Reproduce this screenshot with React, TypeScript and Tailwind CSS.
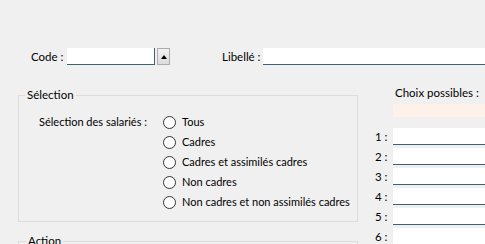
import { useState } from "react";

const options = [
  "Tous",
  "Cadres",
  "Cadres et assimilés cadres",
  "Non cadres",
  "Non cadres et non assimilés cadres",
];

function Radio({ label, checked, onClick }: { label: string; checked: boolean; onClick: () => void }) {
  return (
    <div className="flex items-center h-[20px] cursor-default" onClick={onClick}>
      <span className="w-[13px] h-[13px] shrink-0 rounded-full border border-[#333] bg-white flex items-center justify-center">
        {checked && <span className="w-[5px] h-[5px] rounded-full bg-[#333]" />}
      </span>
      <span className="ml-[6px]">{label}</span>
    </div>
  );
}

export default function App() {
  const [selected, setSelected] = useState<number | null>(null);

  return (
    <div
      className="w-[485px] h-[244px] overflow-hidden bg-[#f0f0f0] text-[11.5px] leading-[16px] text-black pt-[48px] whitespace-nowrap"
      style={{ fontFamily: 'Lato, "Liberation Sans", sans-serif' }}
    >
      {/* Top row */}
      <div className="flex items-center h-[17px]">
        <span className="ml-[31px] w-[36px]">Code :</span>
        <div className="w-[88px] h-[17px] bg-white border-b border-r border-[#3b6172]" />
        <button className="ml-[2px] w-[13px] h-[17px] border border-[#acacac] bg-gradient-to-b from-[#f2f2f2] to-[#dcdcdc] flex items-center justify-center">
          <span className="w-0 h-0 border-l-[3px] border-r-[3px] border-b-[4px] border-l-transparent border-r-transparent border-b-black" />
        </button>
        <span className="ml-[52px] w-[41px]">Libellé :</span>
        <div className="flex-1 h-[17px] bg-white border-b border-[#3b6172]" />
      </div>

      <div className="flex mt-[20px]">
        {/* Left column */}
        <div className="ml-[18px] w-[340px] shrink-0">
          <fieldset className="mt-[2px] h-[135px] border border-[#dcdcdc] px-0">
            <legend className="ml-[6px] px-[2px]">Sélection</legend>
            <div className="flex pt-[9px] text-[11px]">
              <div className="ml-[20px] w-[124px] h-[20px] flex items-center">Sélection des salariés :</div>
              <div className="flex flex-col">
                {options.map((o, i) => (
                  <Radio key={o} label={o} checked={selected === i} onClick={() => setSelected(i)} />
                ))}
              </div>
            </div>
          </fieldset>
          <fieldset className="mt-[11px] h-[60px] border border-[#dcdcdc]">
            <legend className="ml-[7px] px-[2px]">Action</legend>
          </fieldset>
        </div>

        {/* Right column */}
        <div className="ml-[17px] flex-1 min-w-0">
          <div className="pl-[20px]">Choix possibles :</div>
          <div className="ml-[18px] mt-[3px] h-[13px] bg-[#fdf1ea]" />
          <div className="mt-[11px] flex flex-col gap-[3px]">
            {[1, 2, 3, 4, 5, 6].map((n) => (
              <div key={n} className="flex items-center h-[17px]">
                <span className="w-[18px]">{n} :</span>
                <div className="flex-1 h-[17px] bg-white border-b border-[#3b6172]" />
              </div>
            ))}
          </div>
        </div>
      </div>
    </div>
  );
}
